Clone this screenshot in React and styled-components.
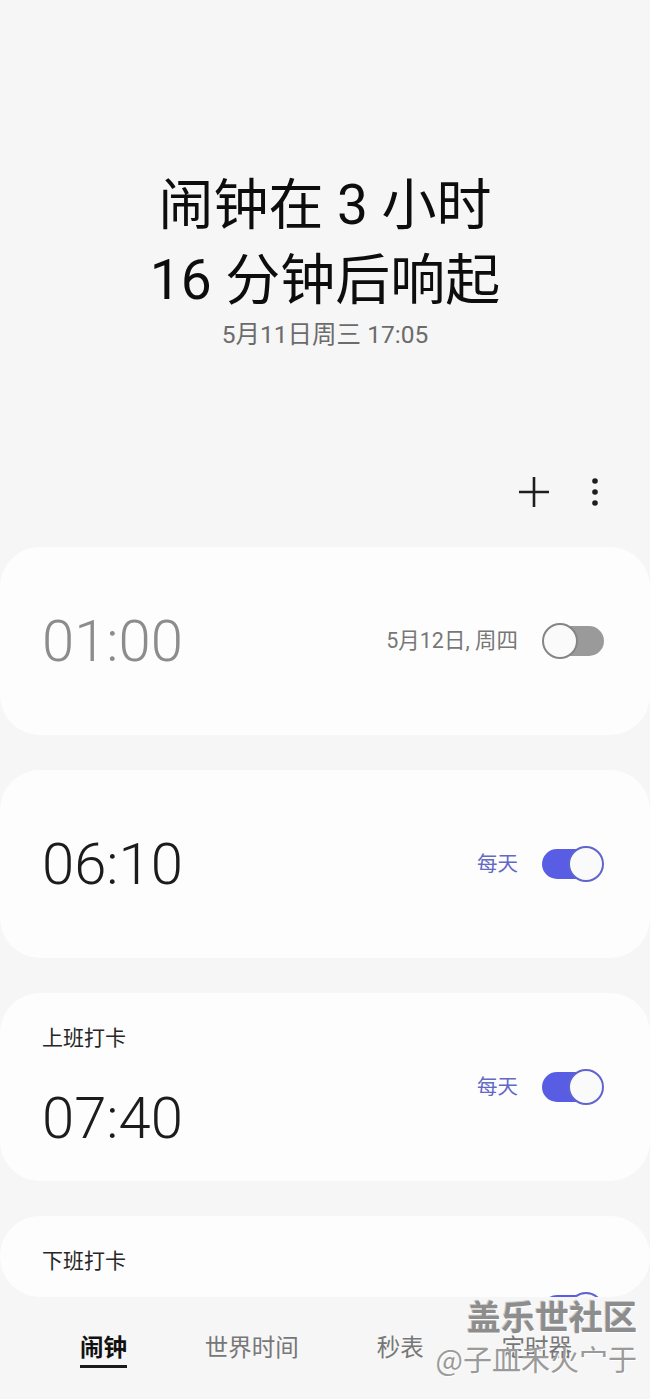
import React from "react";
import styled, { createGlobalStyle } from "styled-components";

const GlobalStyle = createGlobalStyle`
  html, body {
    margin: 0;
    padding: 0;
    background: #f6f6f6;
  }
  * {
    box-sizing: border-box;
  }
`;

const alarms = [
  { id: 1, time: "01:00", note: "5月12日, 周四", on: false },
  { id: 2, time: "06:10", note: "每天", on: true },
  { id: 3, label: "上班打卡", time: "07:40", note: "每天", on: true },
  { id: 4, label: "下班打卡", time: "18:00", note: "每天", on: true },
];

const tabs = ["闹钟", "世界时间", "秒表", "定时器"];

const App = () => {
  return (
    <>
      <GlobalStyle />
      <Page>
        <Header>
          <Title>
            闹钟在 3 小时
            <br />
            16 分钟后响起
          </Title>
          <SubTitle>5月11日周三 17:05</SubTitle>
        </Header>

        <Toolbar>
          <IconButton aria-label="添加">
            <svg width="34" height="34" viewBox="0 0 34 34">
              <path d="M17 2v30M2 17h30" stroke="#1e1e1e" strokeWidth="2.6" />
            </svg>
          </IconButton>
          <IconButton aria-label="更多">
            <svg width="8" height="30" viewBox="0 0 8 30">
              <circle cx="4" cy="4" r="2.8" fill="#1e1e1e" />
              <circle cx="4" cy="15" r="2.8" fill="#1e1e1e" />
              <circle cx="4" cy="26" r="2.8" fill="#1e1e1e" />
            </svg>
          </IconButton>
        </Toolbar>

        <ListViewport>
          {alarms.map((alarm) => (
            <AlarmCard key={alarm.id}>
              <TimeColumn>
                {alarm.label && <AlarmLabel>{alarm.label}</AlarmLabel>}
                <AlarmTime on={alarm.on}>{alarm.time}</AlarmTime>
              </TimeColumn>
              <RightSide>
                <Note on={alarm.on}>{alarm.note}</Note>
                <Switch on={alarm.on}>
                  <Thumb on={alarm.on} />
                </Switch>
              </RightSide>
            </AlarmCard>
          ))}
        </ListViewport>

        <TabBar>
          {tabs.map((tab, index) => (
            <Tab key={tab} active={index === 0}>
              {tab}
            </Tab>
          ))}
        </TabBar>

        <Watermark>
          <WatermarkTop>盖乐世社区</WatermarkTop>
          <WatermarkBottom>@子皿禾火宀于</WatermarkBottom>
        </Watermark>
      </Page>
    </>
  );
};

const cjk = `"Noto Sans CJK SC", "Noto Sans", sans-serif`;

const Page = styled.div`
  position: relative;
  width: 650px;
  height: 1399px;
  overflow: hidden;
  background: #f6f6f6;
  display: flex;
  flex-direction: column;
  font-family: Roboto, ${cjk};
`;

const Header = styled.div`
  padding-top: 168px;
  display: flex;
  flex-direction: column;
  align-items: center;
`;

const Title = styled.div`
  font-family: Roboto, ${cjk};
  font-size: 55px;
  line-height: 75px;
  color: #0d0d0d;
  text-align: center;
`;

const SubTitle = styled.div`
  margin-top: 2px;
  font-family: Roboto, ${cjk};
  font-size: 24.5px;
  line-height: 30px;
  color: #6b6b6b;
`;

const Toolbar = styled.div`
  margin-top: 117px;
  height: 50px;
  display: flex;
  justify-content: flex-end;
  align-items: center;
  gap: 21px;
  padding-right: 35px;
`;

const IconButton = styled.button`
  width: 40px;
  height: 50px;
  border: none;
  background: transparent;
  padding: 0;
  display: flex;
  align-items: center;
  justify-content: center;
`;

const ListViewport = styled.div`
  margin-top: 30px;
  height: 750px;
  overflow: hidden;
  display: flex;
  flex-direction: column;
  gap: 35px;
  border-radius: 0 0 40px 40px;
`;

const AlarmCard = styled.div`
  flex: none;
  height: 188px;
  border-radius: 40px;
  background: #fdfdfd;
  display: flex;
  align-items: center;
  justify-content: space-between;
  padding: 0 46px 0 42px;
`;

const TimeColumn = styled.div`
  display: flex;
  flex-direction: column;
  gap: 33px;
`;

const AlarmLabel = styled.div`
  font-family: ${cjk};
  font-size: 21px;
  line-height: 28px;
  color: #262626;
`;

const AlarmTime = styled.div`
  font-family: Roboto, sans-serif;
  font-weight: 300;
  font-size: 58px;
  line-height: 70px;
  color: ${(props) => (props.on ? "#1c1c1c" : "#8c8c8c")};
`;

const RightSide = styled.div`
  display: flex;
  align-items: center;
  gap: 24px;
`;

const Note = styled.div`
  font-family: Roboto, ${cjk};
  font-size: ${(props) => (props.on ? "20.5px" : "21.5px")};
  line-height: 26px;
  color: ${(props) => (props.on ? "#6468c6" : "#777777")};
`;

const Switch = styled.div`
  position: relative;
  width: 62px;
  height: 36px;
  display: flex;
  align-items: center;

  &::before {
    content: "";
    position: absolute;
    left: ${(props) => (props.on ? "0" : "6px")};
    right: ${(props) => (props.on ? "6px" : "0")};
    top: 3px;
    bottom: 3px;
    border-radius: 15px;
    background: ${(props) => (props.on ? "#595de4" : "#9a9a9a")};
  }
`;

const Thumb = styled.div`
  position: absolute;
  top: 0;
  left: ${(props) => (props.on ? "26px" : "0")};
  width: 36px;
  height: 36px;
  border-radius: 50%;
  background: #fafafa;
  border: 2px solid ${(props) => (props.on ? "#6064cf" : "#858585")};
`;

const TabBar = styled.div`
  flex: 1;
  display: flex;
  justify-content: space-between;
  align-items: center;
  padding: 0 78px 0 80px;
`;

const Tab = styled.div`
  font-family: ${cjk};
  font-size: 23.5px;
  line-height: 30px;
  font-weight: ${(props) => (props.active ? 700 : 400)};
  color: ${(props) => (props.active ? "#111111" : "#777777")};
  padding-bottom: 4px;
  border-bottom: 3px solid
    ${(props) => (props.active ? "#1a1a1a" : "transparent")};
  margin-top: 3px;
`;

const Watermark = styled.div`
  position: absolute;
  right: 13px;
  bottom: 24px;
  display: flex;
  flex-direction: column;
  align-items: flex-end;
  gap: 6px;
  font-family: ${cjk};
  pointer-events: none;
`;

const WatermarkTop = styled.div`
  font-size: 34px;
  line-height: 38px;
  font-weight: 700;
  color: #8d8d8d;
  text-shadow: 1px 1px 0 #ffffff, -1px -1px 0 #c8c8c8;
`;

const WatermarkBottom = styled.div`
  font-size: 29px;
  line-height: 34px;
  color: #9a9a9a;
  text-shadow: 1px 1px 0 #ffffff;
`;

export default App;
